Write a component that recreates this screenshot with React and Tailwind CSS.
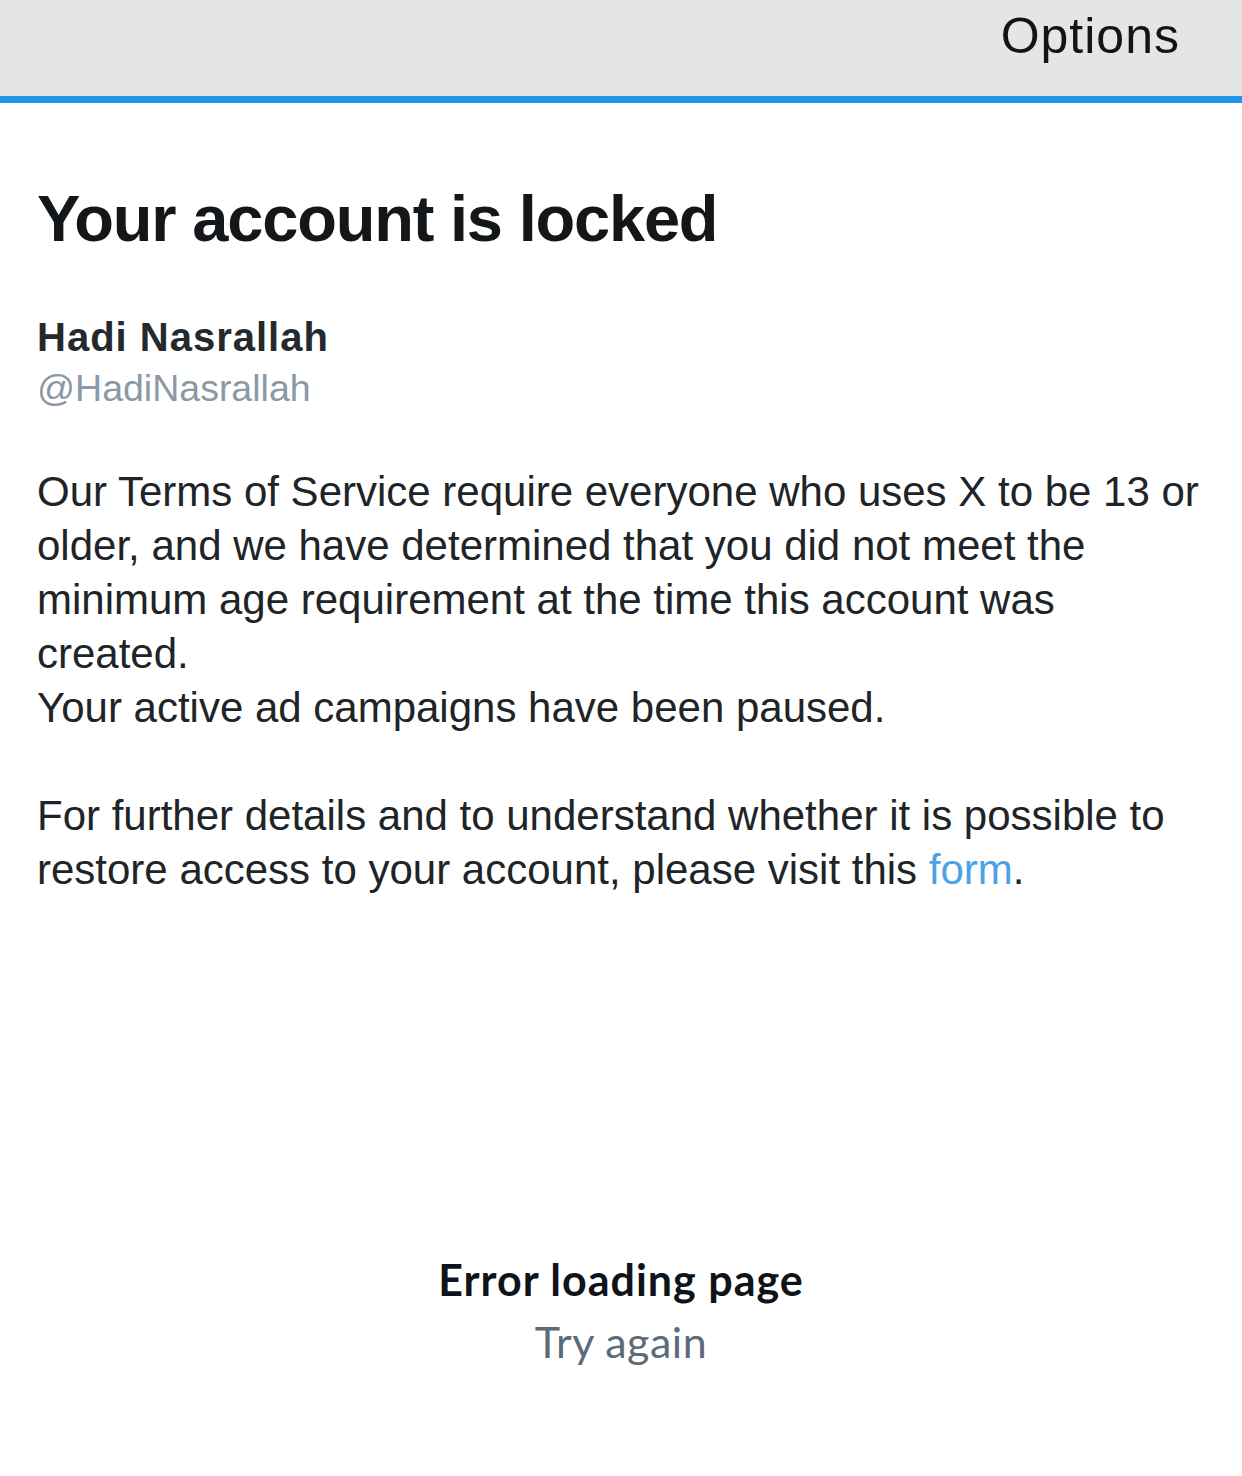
export default function App() {
  return (
    <div className="w-[1242px] h-[1476px] bg-white flex flex-col" style={{ fontFamily: '"Liberation Sans", Arial, sans-serif' }}>
      {/* top bar */}
      <div className="h-[90px] bg-[#e5e5e6] flex justify-end pr-[62px] pt-[6px] border-b-[7px] border-[#1f96e8] box-content">
        <span className="text-[50px] leading-[60px] tracking-[1px] text-[#141414]">Options</span>
      </div>

      <div className="pl-[37px] pt-[76px] text-[#1c1f23]">
        <h1 className="text-[65px] font-bold leading-[80px] tracking-[-1.2px] text-[#14171a]">Your account is locked</h1>

        <div className="mt-[54px] text-[40px] font-bold leading-[48px] tracking-[1px] text-[#24292e]">Hadi Nasrallah</div>
        <div className="mt-[3px] text-[37.5px] leading-[48px] text-[#8b98a5]">@HadiNasrallah</div>

        <div className="mt-[53px] text-[42px] leading-[54px] text-[#202427] whitespace-nowrap">
          <p>
            Our Terms of Service require everyone who uses X to be 13 or<br />
            older, and we have determined that you did not meet the<br />
            minimum age requirement at the time this account was<br />
            created.
          </p>
          <p>Your active ad campaigns have been paused.</p>
          <p className="mt-[54px]">
            For further details and to understand whether it is possible to<br />
            restore access to your account, please visit this <span className="text-[#4ba3e3]">form</span>.
          </p>
        </div>
      </div>

      <div className="mt-[352px] flex flex-col items-center" style={{ fontFamily: 'Lato, "Open Sans", sans-serif' }}>
        <div className="text-[43px] font-bold leading-[62px] tracking-[1px] text-[#0f1419]">Error loading page</div>
        <div className="text-[43px] leading-[62px] tracking-[0.5px] text-[#5b6b7a]">Try again</div>
      </div>
    </div>
  );
}
